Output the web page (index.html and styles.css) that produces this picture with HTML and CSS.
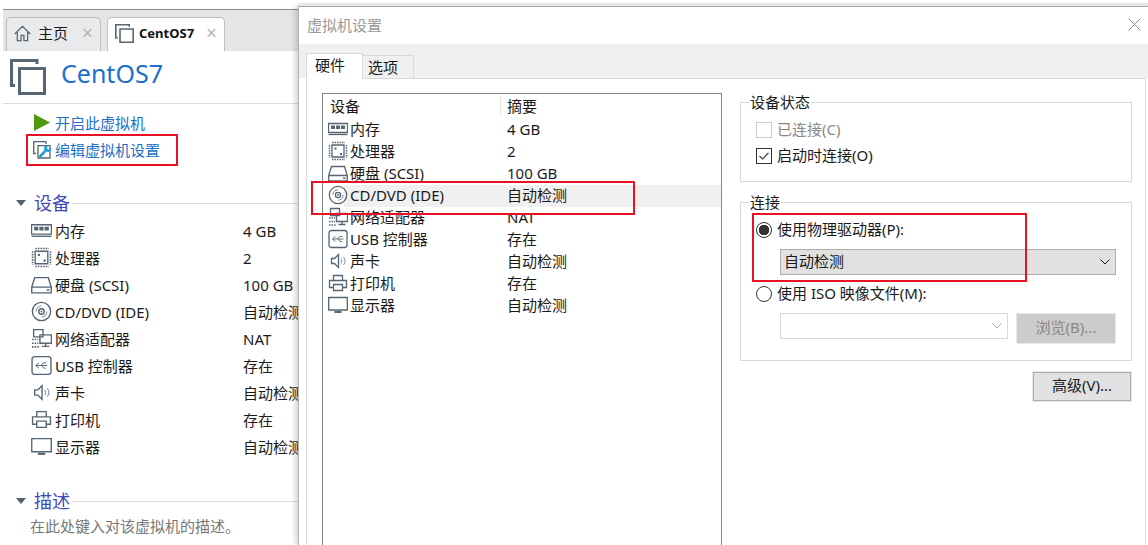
FILE: index.html
```html
<!DOCTYPE html>
<html lang="zh-CN">
<head>
<meta charset="utf-8">
<title>CentOS7 - 虚拟机设置</title>
<link rel="stylesheet" href="styles.css">
</head>
<body>
<svg class="defs" width="0" height="0" aria-hidden="true">
  <symbol id="i-mem" viewBox="0 0 20 20"><path class="s" d="M.5 4.500h19v9H.5z"/><path class="f" d="M3 6.500h4v3.500H3zM8 6.500h4v3.500H8zM13 6.500h4v3.500h-4z"/><path class="s" d="M.5 15.500h19"/></symbol>
  <symbol id="i-cpu" viewBox="0 0 20 20"><path class="s" d="M4 4h12v12H4z"/><path class="f" d="M6.500 6.500h2v2h-2zM12 12h2v2h-2z"/><path class="d" d="M4 1.500h13M4 18.500h13M1.500 4v13M18.500 4v13"/></symbol>
  <symbol id="i-hdd" viewBox="0 0 20 20"><path class="s" d="M.7 12.500 3.500 3.500h13l2.800 9v5.500H.7zM.7 12.500h18.600"/><path class="f" d="M15 14.500h2.500V16H15z"/></symbol>
  <symbol id="i-cd" viewBox="0 0 20 20"><circle class="s" cx="10" cy="10" r="8.700"/><circle class="s" cx="10" cy="10" r="2.600"/><circle class="f" cx="10" cy="10" r=".9"/><path class="t" d="M4.800 10a5.200 5.200 0 0 1 5.200-5.200M15.200 10a5.200 5.200 0 0 1-5.200 5.200"/></symbol>
  <symbol id="i-net" viewBox="0 0 20 20"><path class="s" d="M2.500 1.500h9v7h-9zM8.500 6.500h11v8h-11zM14 14.500v3M10.500 17.500h7"/><path class="d" d="M1 11h6M1 14.500h6M1 18h7"/></symbol>
  <symbol id="i-usb" viewBox="0 0 20 20"><rect class="s" x="1" y="1.500" width="18" height="17" rx="2.500"/><path class="u" d="M4.500 10h11M7.500 7.500 4.500 10l3 2.500M9.500 10l2-2.500h3M10.500 10l1.500 2.500h2"/></symbol>
  <symbol id="i-snd" viewBox="0 0 20 20"><path class="s" d="M3.500 7.500h3l4-4v13l-4-4h-3z"/><path class="t" d="M13 7.500a4 4 0 0 1 0 5M15.500 6a6.500 6.500 0 0 1 0 8"/></symbol>
  <symbol id="i-prt" viewBox="0 0 20 20"><path class="s" d="M5.500 7V2.500h9V7M5.500 14.500h-4V7.500h17v7h-4M5.500 11.500h9v6h-9z"/></symbol>
  <symbol id="i-mon" viewBox="0 0 20 20"><path class="s" d="M.7 2.500h18.600v12.500H.7z"/><path class="f" d="M6.500 16h7v2h-7z"/></symbol>
  <symbol id="i-vm" viewBox="0 0 36 36"><path class="vb" d="M5 26.500H1.500v-25H27v3.500"/><path class="vb" d="M9.500 9.500h25v25h-25z"/></symbol>
  <symbol id="i-chev" viewBox="0 0 12 8"><path d="M1.500 1.500 6 6l4.500-4.500" fill="none" stroke="currentColor"/></symbol>
</svg>

<div class="app">
  <section class="vmpane">
    <nav class="tabbar">
      <div class="vtab">
        <svg class="tabico" viewBox="0 0 18 18"><path class="s" d="M.7 9.500 9 1.500l8.300 8M3.500 7.500v9h4v-5.500h3v5.500h4v-9"/></svg>
        <span class="vtab-text">主页</span>
        <span class="vtab-x">×</span>
      </div>
      <div class="vtab vtab-on">
        <svg class="tabico tabico-vm" viewBox="0 0 36 36"><use href="#i-vm"/></svg>
        <span class="vtab-bold">CentOS7</span>
        <span class="vtab-x">×</span>
      </div>
    </nav>
    <header class="vmhead">
      <svg class="vmico"><use href="#i-vm"/></svg>
      <h1 class="vmname">CentOS7</h1>
    </header>
    <div class="actions">
      <a class="action"><svg class="aico" viewBox="0 0 18 18"><path class="play" d="M0 0 17 9 0 18z"/></svg>开启此虚拟机</a>
      <a class="action"><svg class="aico aico-edit" viewBox="0 0 18 18"><path class="s" d="M3 12.500H.7V.7h12.300V3M5 4.700h12V17H5z"/><path class="wrench" d="M18 6.500a3.200 3.200 0 0 1-4.500 4l-6 6.500-2-2 6-6a3.200 3.200 0 0 1 4-4.500l-2 2.200 2.300 2z"/></svg>编辑虚拟机设置</a>
    </div>
    <div class="sect sect-dev"><i class="tri"></i><span class="sect-name">设备</span><span class="sect-line"></span></div>
    <ul class="devs">
      <li class="dev"><svg class="dico"><use href="#i-mem"/></svg><span class="dn">内存</span><span>4 GB</span></li>
      <li class="dev"><svg class="dico"><use href="#i-cpu"/></svg><span class="dn">处理器</span><span>2</span></li>
      <li class="dev"><svg class="dico"><use href="#i-hdd"/></svg><span class="dn">硬盘 (SCSI)</span><span>100 GB</span></li>
      <li class="dev"><svg class="dico"><use href="#i-cd"/></svg><span class="dn">CD/DVD (IDE)</span><span>自动检测</span></li>
      <li class="dev"><svg class="dico"><use href="#i-net"/></svg><span class="dn">网络适配器</span><span>NAT</span></li>
      <li class="dev"><svg class="dico"><use href="#i-usb"/></svg><span class="dn">USB 控制器</span><span>存在</span></li>
      <li class="dev"><svg class="dico"><use href="#i-snd"/></svg><span class="dn">声卡</span><span>自动检测</span></li>
      <li class="dev"><svg class="dico"><use href="#i-prt"/></svg><span class="dn">打印机</span><span>存在</span></li>
      <li class="dev"><svg class="dico"><use href="#i-mon"/></svg><span class="dn">显示器</span><span>自动检测</span></li>
    </ul>
    <div class="sect sect-desc"><i class="tri"></i><span class="sect-name">描述</span><span class="sect-line"></span></div>
    <p class="desc">在此处键入对该虚拟机的描述。</p>
  </section>

  <section class="dialog">
    <div class="dlg-title"><span>虚拟机设置</span>
      <svg class="dlg-x" viewBox="0 0 13 13"><path d="M.5.500l12 12M12.500.500l-12 12"/></svg>
    </div>
    <div class="dlg-tabs">
      <div class="dtab dtab-on">硬件</div>
      <div class="dtab">选项</div>
    </div>
    <div class="dlg-body">
      <div class="list">
        <div class="lhead"><span class="lh1">设备</span><span class="lh2">摘要</span></div>
        <div class="lrow"><svg class="lico"><use href="#i-mem"/></svg><span class="ln">内存</span><span>4 GB</span></div>
        <div class="lrow"><svg class="lico"><use href="#i-cpu"/></svg><span class="ln">处理器</span><span>2</span></div>
        <div class="lrow"><svg class="lico"><use href="#i-hdd"/></svg><span class="ln">硬盘 (SCSI)</span><span>100 GB</span></div>
        <div class="lrow lrow-on"><svg class="lico"><use href="#i-cd"/></svg><span class="ln">CD/DVD (IDE)</span><span>自动检测</span></div>
        <div class="lrow"><svg class="lico"><use href="#i-net"/></svg><span class="ln">网络适配器</span><span>NAT</span></div>
        <div class="lrow"><svg class="lico"><use href="#i-usb"/></svg><span class="ln">USB 控制器</span><span>存在</span></div>
        <div class="lrow"><svg class="lico"><use href="#i-snd"/></svg><span class="ln">声卡</span><span>自动检测</span></div>
        <div class="lrow"><svg class="lico"><use href="#i-prt"/></svg><span class="ln">打印机</span><span>存在</span></div>
        <div class="lrow"><svg class="lico"><use href="#i-mon"/></svg><span class="ln">显示器</span><span>自动检测</span></div>
      </div>
      <div class="side">
        <fieldset class="grp grp-state">
          <legend>设备状态</legend>
          <div class="opt opt-off"><i class="chk chk-off"></i>已连接(C)</div>
          <div class="opt"><i class="chk"><svg viewBox="0 0 14 14"><path d="M2.500 7l3 3 6-6"/></svg></i>启动时连接(O)</div>
        </fieldset>
        <fieldset class="grp grp-conn">
          <legend>连接</legend>
          <div class="opt opt-r1"><i class="radio radio-on"></i>使用物理驱动器(P):</div>
          <div class="combo combo-on"><span>自动检测</span><svg class="chev"><use href="#i-chev"/></svg></div>
          <div class="opt opt-r2"><i class="radio"></i>使用 ISO 映像文件(M):</div>
          <div class="isorow">
            <div class="combo combo-off"><svg class="chev"><use href="#i-chev"/></svg></div>
            <div class="btn btn-off">浏览(B)...</div>
          </div>
        </fieldset>
        <div class="btnrow"><div class="btn">高级(V)...</div></div>
      </div>
    </div>
  </section>

  <i class="mark mark-a"></i>
  <i class="mark mark-b"></i>
  <i class="mark mark-c"></i>
</div>
</body>
</html>
```

FILE: styles.css
```css
* { box-sizing: border-box; }
html, body { margin: 0; padding: 0; }
body { background: #fff; font: 15px/20px "Noto Sans", "Noto Sans CJK SC", sans-serif; color: #1a1a1a; overflow: hidden; }
.defs { position: absolute; }
.app { position: relative; width: 1148px; height: 545px; overflow: hidden; }

.s, .vb { fill: none; stroke: #566573; stroke-width: 1.300; }
.vb { stroke-width: 3; }
.f { fill: #566573; }
.d { fill: none; stroke: #566573; stroke-width: 1.500; stroke-dasharray: 1.500 1; }
.t { fill: none; stroke: #8a96a0; stroke-width: 1; }
.u { fill: none; stroke: #566573; stroke-width: .9; }
.play { fill: #4c9a0c; }
.wrench { fill: #1f9fd6; }

/* left pane */
.vmpane { width: 298px; padding-top: 9px; }
.tabbar { display: flex; gap: 6px; height: 42px; margin-left: 3px; padding: 7px 0 0 3px; background: #e4e5e6; border-top: 1px solid #8c8c8c; }
.vtab { display: flex; align-items: center; height: 34px; width: 95px; padding: 0 0 3px 7px; background: #e9eaeb; border: 1px solid #bdbdbd; border-bottom: 0; border-radius: 5px 5px 0 0; }
.vtab-on { width: 118px; background: #fff; }
.tabico { width: 17px; height: 17px; flex: none; margin-right: 7px; }
.tabico-vm { width: 19px; height: 19px; margin-right: 5px; }
.vtab-text { width: 44px; }
.vtab-bold { width: 67px; font-size: 13px; font-weight: 700; color: #111; }
.vtab-x { font-size: 19px; color: #b5b5b5; line-height: 20px; }
.vmhead { display: flex; align-items: center; height: 53px; margin-left: 3px; padding-left: 7px; border-bottom: 1px solid #dcdcdc; }
.vmico { width: 36px; height: 36px; margin-right: 15px; flex: none; }
.vmname { margin: 0 0 9px; font-size: 25px; font-weight: 400; line-height: 30px; color: #1c6fcf; }
.actions { padding: 6px 0 0 34px; }
.action { display: flex; align-items: center; height: 27px; padding-bottom: 2px; color: #1c6fc6; }
.aico { width: 17px; height: 17px; flex: none; margin-right: 4px; }
.aico-edit { width: 18px; height: 18px; margin-left: -1px; margin-right: 4px; }
.sect { display: flex; align-items: center; height: 26px; padding-left: 16px; }
.sect-dev { margin-top: 26px; }
.sect-desc { margin-top: 27px; }
.tri { width: 0; height: 0; border: 5.500px solid transparent; border-top: 6px solid #55626e; border-bottom: 0; margin-right: 8px; }
.sect-name { font-size: 18px; color: #3f49b5; margin-right: 2px; padding-bottom: 1px; }
.sect-line { flex: 1; height: 1px; background: #dcdcdc; }
.devs { list-style: none; margin: 2px 0 0; padding: 0 0 0 31px; }
.dev { display: flex; align-items: center; height: 27px; padding-bottom: 2px; white-space: nowrap; }
.dico { width: 21px; height: 21px; flex: none; margin-right: 3px; }
.dn { width: 188px; flex: none; }
.desc { margin: 2px 0 0 30px; font-size: 15px; line-height: 20px; color: #777; white-space: nowrap; }

/* dialog window */
.dialog { position: absolute; left: 298px; top: 6px; width: 850px; height: 539px; background: #fff; border-top: 1px solid #a8a8a8; border-left: 1px solid #b4b4b4; box-shadow: 0 -3px 0 #e8e8e8, -3px 0 5px rgba(0, 0, 0, .16); }
.dlg-title { display: flex; align-items: center; justify-content: space-between; height: 37px; padding: 0 7px 2px 8px; color: #999; }
.dlg-x { width: 13px; height: 13px; fill: none; stroke: #8c8c8c; }
.dlg-tabs { display: flex; align-items: flex-end; height: 34px; padding-left: 7px; background: #f0f0f0; }
.dtab { height: 23px; width: 51px; padding-left: 5px; background: #f0f0f0; border: 1px solid #d9d9d9; border-bottom: 0; border-left: 0; line-height: 22px; }
.dtab-on { position: relative; z-index: 1; height: 26px; width: 57px; margin-bottom: -1px; padding-left: 8px; background: #fff; border-left: 1px solid #d9d9d9; line-height: 22px; }
.dlg-body { display: flex; align-items: flex-start; gap: 18px; height: 470px; margin: 0 2px 0 7px; padding: 14px 0 0 15px; border: 1px solid #d9d9d9; }
.list { width: 400px; height: 470px; border: 1px solid #828790; border-bottom: 0; flex: none; }
.lhead { display: flex; height: 25px; align-items: center; padding-bottom: 2px; }
.lh1 { width: 178px; padding-left: 7px; border-right: 1px solid #e5e5e5; }
.lh2 { padding-left: 6px; }
.lrow { display: flex; align-items: center; height: 22px; padding: 0 0 2px 5px; white-space: nowrap; }
.lrow-on { background: linear-gradient(90deg, #fff 21px, #f0f0f0 21px); }
.lico { width: 20px; height: 20px; flex: none; margin-right: 2px; }
.ln { width: 157px; flex: none; }

.side { width: 392px; margin-top: -1px; }
.grp { margin: 0; padding: 0 0 0 15px; border: 1px solid #d9d9d9; }
.grp legend { padding: 0 1px; margin-left: -7px; line-height: 20px; }
.grp-state { height: 90px; }
.grp-conn { height: 169px; margin-top: 10px; }
.opt { display: flex; align-items: center; height: 26px; padding-bottom: 2px; white-space: nowrap; }
.grp-state .opt:first-of-type { margin-top: 5px; }
.opt-off { color: #888; }
.opt-r1 { margin-top: 5px; }
.opt-r2 { margin-top: 6px; }
.chk { display: block; width: 16px; height: 16px; flex: none; margin: 2px 5px 0 0; border: 1px solid #333; }
.chk svg { display: block; width: 14px; height: 14px; fill: none; stroke: #444; stroke-width: 1.200; }
.chk-off { border-color: #ccc; }
.radio { display: block; width: 16px; height: 16px; flex: none; margin: 2px 5px 0 0; border: 1px solid #333; border-radius: 50%; }
.radio-on { background: radial-gradient(circle, #333 5px, #fff 5.500px); }
.combo { position: relative; height: 26px; margin-left: 24px; padding-left: 3px; line-height: 23px; }
.combo-on { width: 336px; margin-top: 6px; background: #e1e1e1; border: 1px solid #adadad; }
.combo-off { width: 228px; margin-left: 0; background: #fff; border: 1px solid #d9d9d9; color: #a0a0a0; }
.chev { position: absolute; right: 4px; top: 8px; width: 12px; height: 8px; }
.isorow { display: flex; align-items: flex-start; gap: 9px; margin: 6px 0 0 24px; }
.btn { width: 98px; height: 29px; text-align: center; line-height: 25px; background: #e1e1e1; border: 1px solid #adadad; outline: 1px solid #e8e8e8; }
.btn-off { background: #ccc; border-color: #ccc; color: #888; margin-top: 1px; }
.btnrow { display: flex; justify-content: flex-end; margin: 11px 1px 0 0; }

/* red annotation boxes drawn over the screenshot */
.mark { position: absolute; border: 2px solid #e81224; }
.mark-a { left: 26px; top: 134px; width: 152px; height: 32px; }
.mark-b { left: 311px; top: 181px; width: 324px; height: 34px; }
.mark-c { left: 752px; top: 213px; width: 275px; height: 69px; }
```
